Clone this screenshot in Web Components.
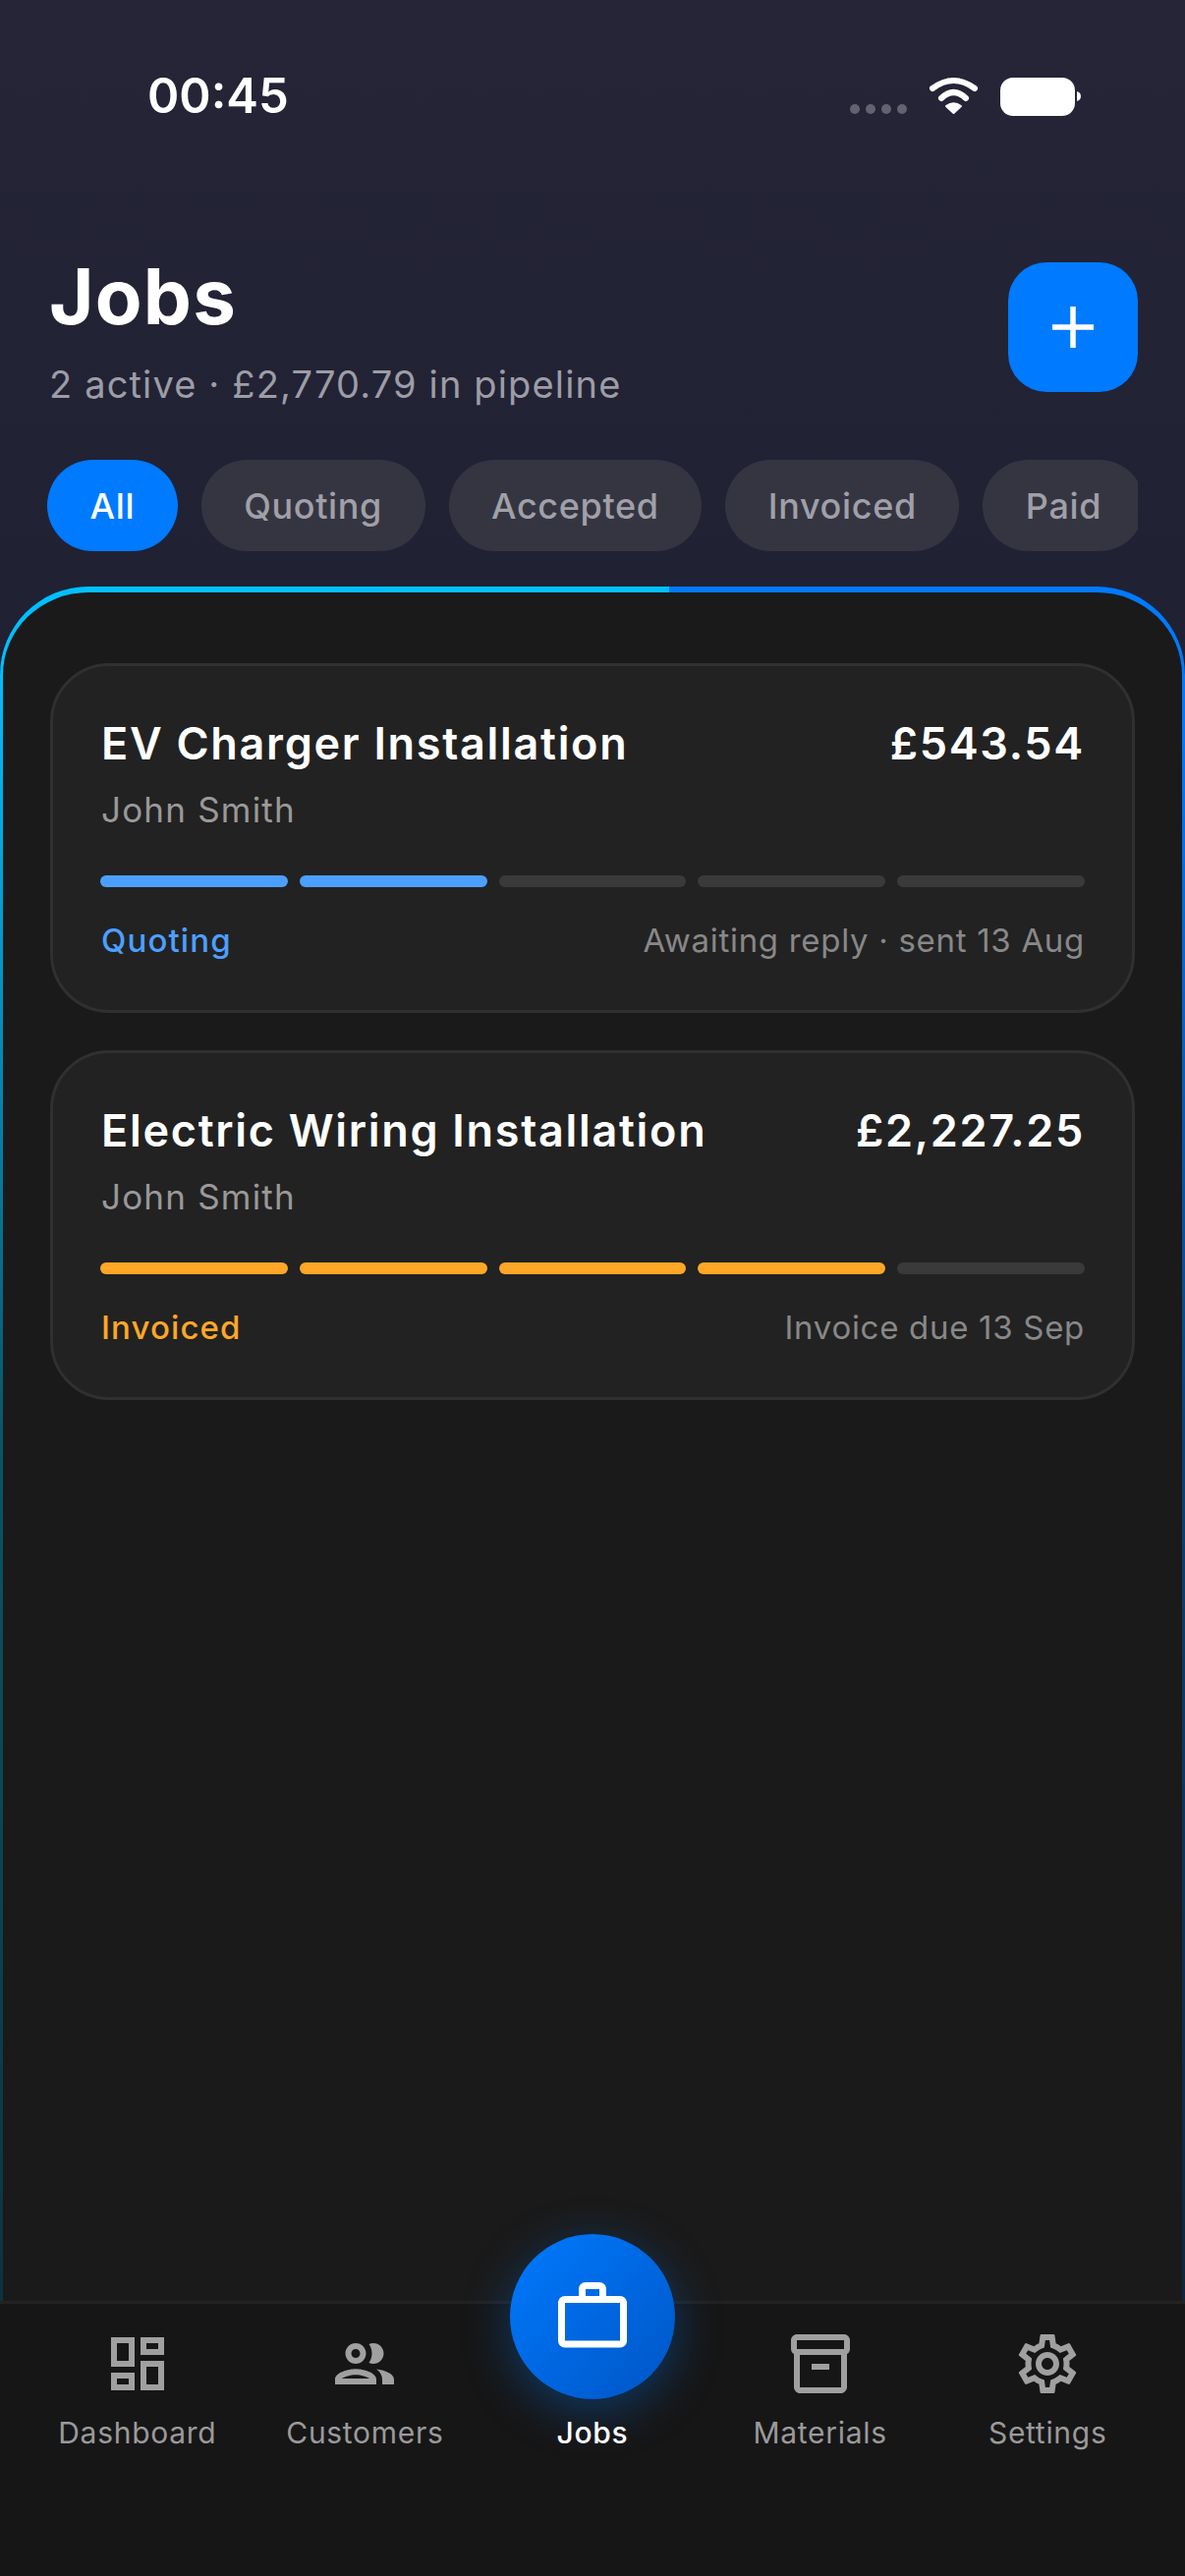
<!DOCTYPE html>
<html lang="en">
<head>
<meta charset="utf-8">
<title>Jobs</title>
<style>
  html, body { margin: 0; padding: 0; background: #161616; }
  body { width: 1206px; height: 2622px; overflow: hidden; font-family: Inter, "Liberation Sans", sans-serif; }
</style>
</head>
<body>
<jobs-app>
  <status-bar slot="top" time="00:45"></status-bar>
  <jobs-header slot="top" heading="Jobs" summary="2 active · £2,770.79 in pipeline"></jobs-header>
  <filter-row slot="top">
    <filter-chip active>All</filter-chip>
    <filter-chip>Quoting</filter-chip>
    <filter-chip>Accepted</filter-chip>
    <filter-chip>Invoiced</filter-chip>
    <filter-chip>Paid</filter-chip>
  </filter-row>
  <job-card heading="EV Charger Installation" amount="£543.54" customer="John Smith"
            stage="Quoting" note="Awaiting reply · sent 13 Aug" steps="2" tone="#4d9fff"></job-card>
  <job-card heading="Electric Wiring Installation" amount="£2,227.25" customer="John Smith"
            stage="Invoiced" note="Invoice due 13 Sep" steps="4" tone="#ffa726"></job-card>
  <bottom-nav slot="nav">
    <nav-item label="Dashboard" icon="dashboard"></nav-item>
    <nav-item label="Customers" icon="customers"></nav-item>
    <nav-item label="Jobs" icon="jobs" active></nav-item>
    <nav-item label="Materials" icon="materials"></nav-item>
    <nav-item label="Settings" icon="settings"></nav-item>
  </bottom-nav>
</jobs-app>

<script>
const ICONS = {
  dashboard: 'M19 5v2h-4V5h4M9 5v6H5V5h4m10 8v6h-4v-6h4M9 17v2H5v-2h4M21 3h-8v6h8V3zM11 3H3v10h8V3zm10 8h-8v10h8V11zm-10 4H3v6h8v-6z',
  customers: 'M9 13.75c-2.34 0-7 1.17-7 3.5V19h14v-1.75c0-2.33-4.66-3.5-7-3.5zM4.34 17c.84-.58 2.87-1.25 4.66-1.25s3.82.67 4.66 1.25H4.34zM9 12c1.93 0 3.5-1.57 3.5-3.5S10.93 5 9 5 5.5 6.57 5.5 8.5 7.07 12 9 12zm0-5c.83 0 1.5.67 1.5 1.5S9.83 10 9 10s-1.5-.67-1.5-1.5S8.17 7 9 7zm7.04 6.81c1.16.84 1.96 1.96 1.96 3.44V19h4v-1.75c0-2.02-3.5-3.17-5.96-3.44zM15 12c1.93 0 3.5-1.57 3.5-3.5S16.93 5 15 5c-.54 0-1.04.13-1.5.35.63.89 1 1.98 1 3.15s-.37 2.26-1 3.15c.46.22.96.35 1.5.35z',
  jobs: 'M14 6V4h-4v2h4zM4 8v11h16V8H4zm16-2c1.11 0 2 .89 2 2v11c0 1.11-.89 2-2 2H4c-1.11 0-2-.89-2-2l.01-11c0-1.11.88-2 1.99-2h4V4c0-1.11.89-2 2-2h4c1.11 0 2 .89 2 2v2h4z',
  materials: 'M20 2H4c-1 0-2 .9-2 2v3.01c0 .72.43 1.34 1 1.69V20c0 1.1 1.1 2 2 2h14c.9 0 2-.9 2-2V8.7c.57-.35 1-.97 1-1.69V4c0-1.1-1-2-2-2zm-1 18H5V9h14v11zm1-13H4V4h16v3zM9 12h6v2H9z',
  settings: 'M19.43 12.98c.04-.32.07-.64.07-.98 0-.34-.03-.66-.07-.98l2.11-1.65c.19-.15.24-.42.12-.64l-2-3.46c-.09-.16-.26-.25-.44-.25-.06 0-.12.01-.17.03l-2.49 1c-.52-.4-1.08-.73-1.69-.98l-.38-2.65C14.46 2.18 14.25 2 14 2h-4c-.25 0-.46.18-.49.42l-.38 2.65c-.61.25-1.17.59-1.69.98l-2.49-1c-.06-.02-.12-.03-.18-.03-.17 0-.34.09-.43.25l-2 3.46c-.13.22-.07.49.12.64l2.11 1.65c-.04.32-.07.65-.07.98 0 .33.03.66.07.98l-2.11 1.65c-.19.15-.24.42-.12.64l2 3.46c.09.16.26.25.44.25.06 0 .12-.01.17-.03l2.49-1c.52.4 1.08.73 1.69.98l.38 2.65c.03.24.24.42.49.42h4c.25 0 .46-.18.49-.42l.38-2.65c.61-.25 1.17-.59 1.69-.98l2.49 1c.06.02.12.03.18.03.17 0 .34-.09.43-.25l2-3.46c.12-.22.07-.49-.12-.64l-2.11-1.65zm-1.98-1.71c.04.31.05.52.05.73 0 .21-.02.43-.05.73l-.14 1.13.89.7 1.08.84-.7 1.21-1.27-.51-1.04-.42-.9.68c-.43.32-.84.56-1.25.73l-1.06.43-.16 1.13-.2 1.35h-1.4l-.19-1.35-.16-1.13-1.06-.43c-.43-.18-.83-.41-1.23-.71l-.91-.7-1.06.43-1.27.51-.7-1.21 1.08-.84.89-.7-.14-1.13c-.03-.31-.05-.54-.05-.74s.02-.43.05-.73l.14-1.13-.89-.7-1.08-.84.7-1.21 1.27.51 1.04.42.9-.68c.43-.32.84-.56 1.25-.73l1.06-.43.16-1.13.2-1.35h1.39l.19 1.35.16 1.13 1.06.43c.43.18.83.41 1.23.71l.91.7 1.06-.43 1.27-.51.7 1.21-1.07.85-.89.7.14 1.13zM12 8c-2.21 0-4 1.79-4 4s1.79 4 4 4 4-1.79 4-4-1.79-4-4-4zm0 6c-1.1 0-2-.9-2-2s.9-2 2-2 2 .9 2 2-.9 2-2 2z'
};

class JobsApp extends HTMLElement {
  constructor() {
    super();
    this.attachShadow({ mode: 'open' });
  }
  connectedCallback() {
    this.shadowRoot.innerHTML = `
      <style>
        :host { display: flex; flex-direction: column; height: 2622px; background: #161616; }
        .top { height: 597px; display: flex; flex-direction: column; flex: none; background: linear-gradient(180deg, #252537, #212134); }
        .wrap { flex: 1; min-height: 0; display: flex; flex-direction: column; background: #212134; }
        .panel {
          flex: 1;
          min-height: 0;
          box-sizing: border-box;
          border-style: solid;
          border-color: transparent;
          border-width: 6px 3px 0;
          border-radius: 90px 90px 0 0;
          padding: 72px 48px 0;
          display: flex;
          flex-direction: column;
          gap: 38px;
          background:
            linear-gradient(#1a1a1a, #1a1a1a) padding-box,
            linear-gradient(180deg, #00bfff 0, #00bfff 5%, #0a5468 50%, #0b3340 100%) left top / 681px 100% no-repeat border-box,
            linear-gradient(180deg, #007aff 0, #007aff 8%, #0c4078 50%, #10263e 100%) right top / 525px 100% no-repeat border-box;
        }
      </style>
      <div class="top"><slot name="top"></slot></div>
      <div class="wrap"><div class="panel"><slot></slot></div></div>
      <slot name="nav"></slot>
    `;
  }
}

class StatusBar extends HTMLElement {
  constructor() {
    super();
    this.attachShadow({ mode: 'open' });
  }
  connectedCallback() {
    this.shadowRoot.innerHTML = `
      <style>
        :host { display: flex; align-items: center; justify-content: space-between; height: 196px; box-sizing: border-box; padding: 0 100px 0 150px; }
        .time { font: 600 49px/62px Inter, "Liberation Sans", sans-serif; color: #fff; }
        .icons { display: block; margin-top: 2px; }
      </style>
      <span class="time">${this.getAttribute('time')}</span>
      <svg class="icons" width="246" height="48" viewBox="0 0 246 48">
        <g fill="#63636f"><circle cx="10" cy="36" r="5"/><circle cx="26" cy="36" r="5"/><circle cx="42" cy="36" r="5"/><circle cx="58" cy="36" r="5"/></g>
        <g fill="none" stroke="#fff" stroke-width="6" stroke-linecap="round">
          <path d="M89 15Q110.500 -1 132 15"/>
          <path d="M98 25Q110.500 13 123 25"/>
        </g>
        <path d="M110.500 40L103 33Q110.500 27.500 118 33Z" fill="#fff" stroke="#fff" stroke-width="2" stroke-linejoin="round"/>
        <rect x="158" y="4" width="76" height="39" rx="13" fill="#fff"/>
        <path d="M236 18v10c2.500-.5 4-2.500 4-5s-1.500-4.500-4-5z" fill="#fff"/>
      </svg>
    `;
  }
}

class JobsHeader extends HTMLElement {
  constructor() {
    super();
    this.attachShadow({ mode: 'open' });
  }
  connectedCallback() {
    this.shadowRoot.innerHTML = `
      <style>
        :host { display: flex; align-items: flex-start; justify-content: space-between; height: 272px; box-sizing: border-box; padding: 59px 48px 0 50px; }
        h1 { margin: 0; font: 700 78px/94px Inter, "Liberation Sans", sans-serif; color: #fff; letter-spacing: 1.2px; }
        p { margin: 18px 0 0; font: 400 38px/48px Inter, "Liberation Sans", sans-serif; color: #9d9da6; letter-spacing: 1.15px; }
        .add { width: 132px; height: 132px; border-radius: 39px; background: #007aff; display: flex; align-items: center; justify-content: center; margin-top: 12px; }
      </style>
      <div>
        <h1>${this.getAttribute('heading')}</h1>
        <p>${this.getAttribute('summary')}</p>
      </div>
      <div class="add">
        <svg width="42" height="42" viewBox="0 0 42 42"><path d="M21 0v42M0 21h42" stroke="#fff" stroke-width="5.500" fill="none"/></svg>
      </div>
    `;
  }
}

class FilterRow extends HTMLElement {
  constructor() {
    super();
    this.attachShadow({ mode: 'open' });
  }
  connectedCallback() {
    this.shadowRoot.innerHTML = `
      <style>
        :host { display: flex; gap: 24px; margin: 0 48px; overflow: hidden; height: 93px; }
      </style>
      <slot></slot>
    `;
  }
}

class FilterChip extends HTMLElement {
  constructor() {
    super();
    this.attachShadow({ mode: 'open' });
  }
  connectedCallback() {
    this.shadowRoot.innerHTML = `
      <style>
        :host {
          display: flex; flex: none; align-items: center; height: 93px; box-sizing: border-box;
          padding: 0 43.500px; border-radius: 47px; background: #353542; color: #a0a0a8;
          font: 500 36px/44px Inter, "Liberation Sans", sans-serif; letter-spacing: .65px;
        }
        :host([active]) { background: #007aff; color: #fff; }
      </style>
      <slot></slot>
    `;
  }
}

class JobCard extends HTMLElement {
  constructor() {
    super();
    this.attachShadow({ mode: 'open' });
  }
  connectedCallback() {
    const steps = Number(this.getAttribute('steps'));
    const tone = this.getAttribute('tone');
    let segs = '';
    for (let i = 0; i < 5; i++) {
      segs += `<i style="background:${i < steps ? tone : '#3a3a3a'}"></i>`;
    }
    this.shadowRoot.innerHTML = `
      <style>
        :host { display: block; box-sizing: border-box; height: 356px; padding: 52px 48px 0; background: #222; border: 3px solid #303030; border-radius: 60px; }
        .row { display: flex; justify-content: space-between; align-items: baseline; }
        .title, .amount { font: 600 45px/54px Inter, "Liberation Sans", sans-serif; color: #fff; letter-spacing: 1.7px; }
        .title { margin-left: 1px; }
        .who { margin: 18px 0 0 1px; font: 400 35px/44px Inter, "Liberation Sans", sans-serif; color: #999; letter-spacing: 1.2px; }
        .bar { display: flex; gap: 12px; margin-top: 45px; }
        .bar i { flex: 1; height: 12px; border-radius: 6px; }
        .foot { margin-top: 34px; }
        .stage { margin-left: 1px; font: 500 33px/40px Inter, "Liberation Sans", sans-serif; letter-spacing: 1.1px; color: ${tone}; }
        .note { font: 400 33px/40px Inter, "Liberation Sans", sans-serif; letter-spacing: .7px; color: #888; }
      </style>
      <div class="row">
        <span class="title">${this.getAttribute('heading')}</span>
        <span class="amount">${this.getAttribute('amount')}</span>
      </div>
      <div class="who">${this.getAttribute('customer')}</div>
      <div class="bar">${segs}</div>
      <div class="row foot">
        <span class="stage">${this.getAttribute('stage')}</span>
        <span class="note">${this.getAttribute('note')}</span>
      </div>
    `;
  }
}

class BottomNav extends HTMLElement {
  constructor() {
    super();
    this.attachShadow({ mode: 'open' });
  }
  connectedCallback() {
    this.shadowRoot.innerHTML = `
      <style>
        :host { display: grid; grid-template-columns: repeat(5, 1fr); flex: none; height: 280px; box-sizing: border-box; padding: 25px 24px 0; background: #161616; border-top: 3px solid #222; }
      </style>
      <slot></slot>
    `;
  }
}

class NavItem extends HTMLElement {
  constructor() {
    super();
    this.attachShadow({ mode: 'open' });
  }
  connectedCallback() {
    const active = this.hasAttribute('active');
    const path = ICONS[this.getAttribute('icon')];
    const icon = active
      ? `<div class="fab"><svg width="84" height="84" viewBox="0 0 24 24" fill="#fff"><path d="${path}"/></svg></div>`
      : `<svg width="72" height="72" viewBox="0 0 24 24" fill="#a0a0a0"><path d="${path}"/></svg>`;
    this.shadowRoot.innerHTML = `
      <style>
        :host { display: flex; flex-direction: column; align-items: center; font: 400 30px/38px Inter, "Liberation Sans", sans-serif; letter-spacing: .7px; color: #9a9a9a; }
        svg { display: block; }
        :host([active]) { color: #fff; font-weight: 500; }
        .label { margin-top: 15px; }
        .fab {
          width: 168px; height: 168px; border-radius: 50%; margin-top: -96px;
          background: linear-gradient(135deg, #007aff, #0055c4);
          box-shadow: 0 12px 48px rgba(0, 122, 255, .35);
          display: flex; align-items: center; justify-content: center;
        }
      </style>
      ${icon}
      <span class="label">${this.getAttribute('label')}</span>
    `;
  }
}

customElements.define('jobs-app', JobsApp);
customElements.define('status-bar', StatusBar);
customElements.define('jobs-header', JobsHeader);
customElements.define('filter-row', FilterRow);
customElements.define('filter-chip', FilterChip);
customElements.define('job-card', JobCard);
customElements.define('bottom-nav', BottomNav);
customElements.define('nav-item', NavItem);
</script>
</body>
</html>
